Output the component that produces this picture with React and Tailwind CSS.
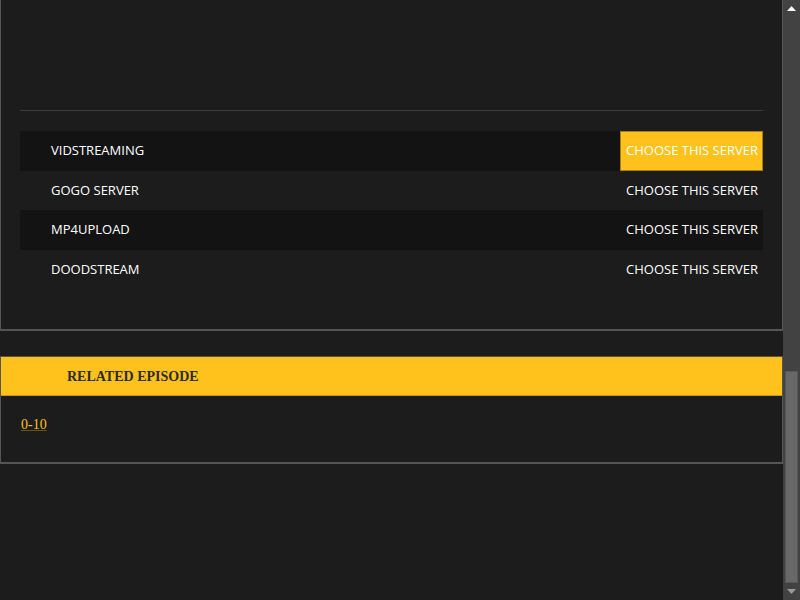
import React, { useLayoutEffect, useRef } from "react";

const servers = ["VIDSTREAMING", "GOGO SERVER", "MP4UPLOAD", "DOODSTREAM"];

function Scrollbar() {
  return (
    <div className="flex h-screen w-[17px] shrink-0 flex-col bg-[#424242]">
      <div className="flex h-[17px] items-center justify-center">
        <svg width="9" height="5" viewBox="0 0 9 5">
          <path d="M4.5 0 L9 5 L0 5 Z" fill="#ffffff" />
        </svg>
      </div>
      <div className="flex flex-1 flex-col justify-end px-[2px]">
        <div className="h-[212px] border border-[#575757] bg-[#686868]" />
      </div>
      <div className="flex h-[17px] items-center justify-center">
        <svg width="9" height="5" viewBox="0 0 9 5">
          <path d="M0 0 L9 0 L4.5 5 Z" fill="#9a9a9a" />
        </svg>
      </div>
    </div>
  );
}

export default function App() {
  const ref = useRef(null);
  useLayoutEffect(() => {
    if (ref.current) ref.current.scrollTop = ref.current.scrollHeight;
  }, []);
  return (
    <div className="flex h-screen bg-[#1c1c1c]">
      <div
        ref={ref}
        className="h-screen min-w-0 flex-1 overflow-y-scroll [scrollbar-width:none]"
      >
        <div className="pb-[136px]">
          <section className="border border-b-2 border-[#555555] px-[19px] pb-[40px]">
            <div className="h-[1119px]" />
            <div className="h-px bg-[#3c3c3c]" />
            <ul className="mt-[20px] font-['Open_Sans',sans-serif] text-[13px] text-white">
              {servers.map((s, i) => (
                <li
                  key={s}
                  className={
                    "flex h-[39.5px] items-center justify-between " +
                    (i % 2 === 0 ? "bg-[#131313]" : "")
                  }
                >
                  <span className="pl-[31px]">{s}</span>
                  {i === 0 ? (
                    <button className="flex h-[39.5px] items-center border border-[#a8800f] bg-[#ffc11b] pl-[5px] pr-[4px] text-white">
                      CHOOSE THIS SERVER
                    </button>
                  ) : (
                    <button className="pr-[5px] text-white">CHOOSE THIS SERVER</button>
                  )}
                </li>
              ))}
            </ul>
          </section>
          <section className="mt-[25px] border border-b-2 border-[#555555]">
            <div className="flex h-[39px] items-center border-b border-[#c9960f] bg-[#ffc11b] pl-[66px] font-['Liberation_Serif',serif] text-[14px] font-bold text-[#2b2b2b]">
              RELATED EPISODE
            </div>
            <div className="h-[66px] px-[20px] pt-[18px] font-['Liberation_Serif',serif] text-[14px]">
              <a href="#" className="text-[#ffc11b] underline decoration-[#6b5317]">
                0-10
              </a>
            </div>
          </section>
        </div>
      </div>
      <Scrollbar />
    </div>
  );
}
